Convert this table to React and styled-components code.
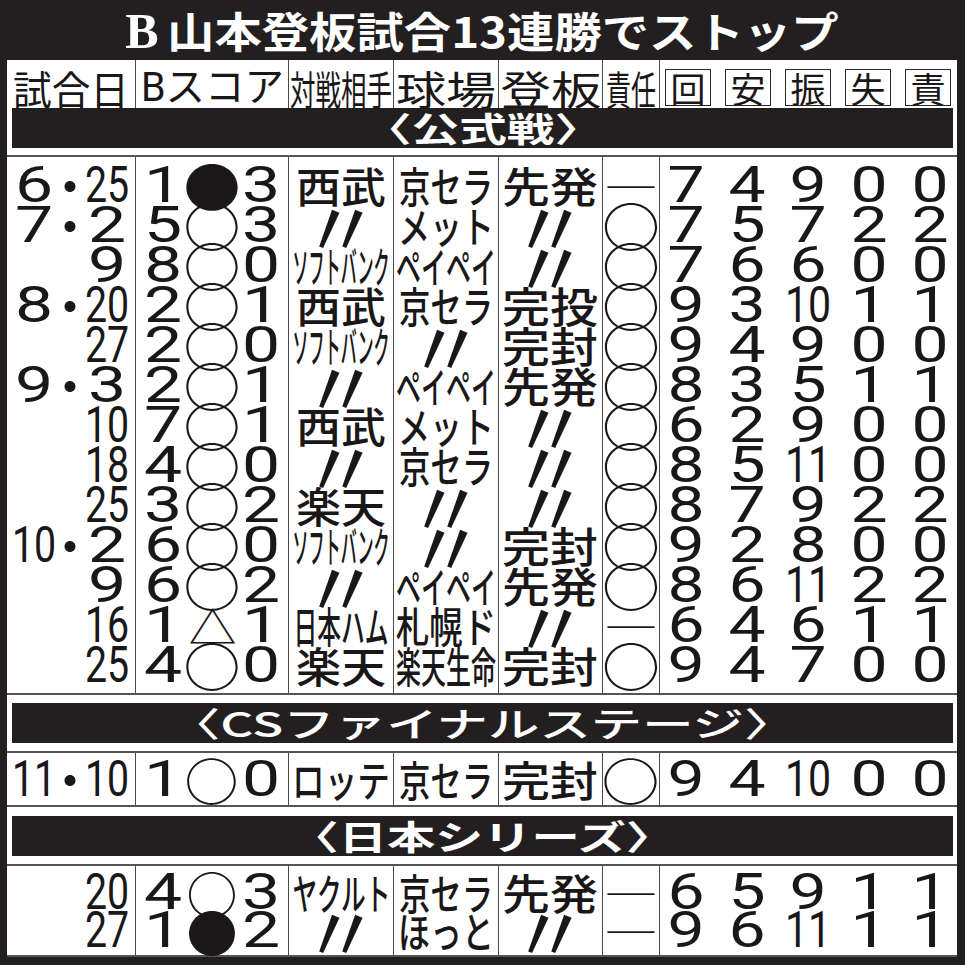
import React, { useLayoutEffect, useRef, useState } from 'react';
import styled, { createGlobalStyle } from 'styled-components';

const JP = '"Noto Sans CJK JP", "Noto Sans", sans-serif';
const NUM = 'Roboto, "Liberation Sans", "Noto Sans CJK JP", sans-serif';
const INK = '#1a1718';
const BLACK = '#231f20';
const LINE = '1.5px solid #4a4a4a';
const COLS = '129px 153px 105px 105px 104px 57px minmax(0, 1fr)';
const D = '〃';

const GlobalStyle = createGlobalStyle`
	html, body {
		margin: 0;
		padding: 0;
		background: ${BLACK};
	}
	body {
		font-family: ${JP};
		color: ${INK};
	}
`;

const FitBox = styled.span`
	display: inline-flex;
	justify-content: center;
	align-items: center;
	flex: none;
	width: ${(p) => p.$w}px;
`;

const Stretch = styled.span`
	display: inline-block;
	flex: none;
	white-space: nowrap;
	font-family: ${(p) => p.$font || JP};
	font-size: ${(p) => p.$size}px;
	font-weight: ${(p) => p.$weight || 400};
	line-height: 1;
	transform-origin: center;
`;

// squeezes / widens a text run to a given advance width (flattened newspaper type)
const Fit = ({ w, size, font, weight, children }) => {
	const ref = useRef(null);
	const [k, setK] = useState(1);

	useLayoutEffect(() => {
		const measure = () => {
			const n = ref.current && ref.current.offsetWidth;
			if (n) setK(w / n);
		};
		measure();
		if (document.fonts) document.fonts.ready.then(measure);
	}, [w, children]);

	return (
		<FitBox $w={w}>
			<Stretch ref={ref} $size={size} $font={font} $weight={weight} style={{ transform: `scaleX(${k})` }}>
				{children}
			</Stretch>
		</FitBox>
	);
};

const Page = styled.div`
	width: 965px;
	height: 965px;
	box-sizing: border-box;
	padding: 0 8px 0 7px;
	background: ${BLACK};
	display: flex;
	flex-direction: column;
	overflow: hidden;
`;

const Title = styled.h1`
	margin: 0;
	height: 60px;
	display: flex;
	align-items: center;
	justify-content: center;
	gap: 8px;
	color: #fff;
	font-weight: 700;
`;

const Logo = styled.span`
	font-family: 'Liberation Serif', serif;
	font-weight: 700;
	font-size: 50px;
	line-height: 1;
	margin-top: 2px;
`;

const Panel = styled.div`
	background: #fff;
	display: flex;
	flex-direction: column;
`;

const HeaderRow = styled.div`
	display: grid;
	grid-template-columns: ${COLS};
	height: 48px;
`;

const HeadCell = styled.div`
	display: flex;
	align-items: center;
	justify-content: ${(p) => (p.$start ? 'flex-start' : 'center')};
	padding-top: 7px;
	box-sizing: border-box;
	border-right: ${(p) => (p.$last ? 'none' : LINE)};
	overflow: visible;
`;

const StatHeads = styled.div`
	display: flex;
	gap: 14px;
	padding-left: 5px;
`;

const StatBox = styled.span`
	width: 46px;
	height: 37px;
	box-sizing: border-box;
	border: 1.5px solid #2a2a2a;
	display: flex;
	align-items: center;
	justify-content: center;
	font-size: 35px;
	line-height: 1;
`;

const Band = styled.div`
	height: 40px;
	margin: ${(p) => p.$mt || 0}px 4px ${(p) => p.$mb || 0}px 5px;
	background: ${BLACK};
	color: #fff;
	display: flex;
	align-items: center;
	justify-content: center;
`;

const Row = styled.div`
	display: grid;
	grid-template-columns: ${COLS};

	> * {
		height: ${(p) => p.$h}px;
	}
`;

const Cell = styled.div`
	display: flex;
	align-items: center;
	justify-content: ${(p) => p.$justify || 'center'};
	padding-right: ${(p) => p.$pr || 0}px;
	border-right: ${(p) => (p.$last ? 'none' : LINE)};
	overflow: visible;
`;

const Block = styled.div`
	border-top: 2px solid #555;
	border-bottom: 2px solid #555;

	> ${Row}:first-child > ${Cell} {
		padding-top: ${(p) => p.$pt}px;
	}
	> ${Row}:last-child > ${Cell} {
		padding-bottom: ${(p) => p.$pb}px;
	}
`;

const DateWrap = styled.div`
	display: grid;
	grid-template-columns: 42px 30px 44px;
	align-items: center;
`;

const Slot = styled.div`
	display: flex;
	align-items: center;
	justify-content: center;
	min-width: 0;
	height: 100%;
`;

const Dot = styled.span`
	font-family: ${JP};
	font-size: 52px;
	line-height: 1;
	margin-top: -2px;
`;

const ScoreWrap = styled.div`
	display: grid;
	grid-template-columns: 40px 50px 40px;
	column-gap: 4px;
	align-items: center;
	padding-left: 7px;
`;

const StatsWrap = styled.div`
	display: grid;
	grid-template-columns: repeat(5, 61px);
	align-items: center;
	margin-left: -4px;
`;

const Ditto = styled.span`
	display: inline-block;
	font-family: ${JP};
	font-size: 42px;
	line-height: 1;
	transform: scale(1.9, 1.85);
`;

const TEXT_W = {
	西武: 90,
	楽天: 90,
	ソフトバンク: 97,
	日本ハム: 95,
	ロッテ: 98,
	ヤクルト: 98,
	京セラ: 94,
	メット: 96,
	ペイペイ: 100,
	札幌ド: 100,
	楽天生命: 100,
	ほっと: 96,
	先発: 96,
	完投: 96,
	完封: 96,
};

const league = [
	{ m: '6', d: '25', s: ['1', '●', '3'], opp: '西武', park: '京セラ', role: '先発', res: '―', st: ['7', '4', '9', '0', '0'] },
	{ m: '7', d: '2', s: ['5', '○', '3'], opp: D, park: 'メット', role: D, res: '○', st: ['7', '5', '7', '2', '2'] },
	{ d: '9', s: ['8', '○', '0'], opp: 'ソフトバンク', park: 'ペイペイ', role: D, res: '○', st: ['7', '6', '6', '0', '0'] },
	{ m: '8', d: '20', s: ['2', '○', '1'], opp: '西武', park: '京セラ', role: '完投', res: '○', st: ['9', '3', '10', '1', '1'] },
	{ d: '27', s: ['2', '○', '0'], opp: 'ソフトバンク', park: D, role: '完封', res: '○', st: ['9', '4', '9', '0', '0'] },
	{ m: '9', d: '3', s: ['2', '○', '1'], opp: D, park: 'ペイペイ', role: '先発', res: '○', st: ['8', '3', '5', '1', '1'] },
	{ d: '10', s: ['7', '○', '1'], opp: '西武', park: 'メット', role: D, res: '○', st: ['6', '2', '9', '0', '0'] },
	{ d: '18', s: ['4', '○', '0'], opp: D, park: '京セラ', role: D, res: '○', st: ['8', '5', '11', '0', '0'] },
	{ d: '25', s: ['3', '○', '2'], opp: '楽天', park: D, role: D, res: '○', st: ['8', '7', '9', '2', '2'] },
	{ m: '10', d: '2', s: ['6', '○', '0'], opp: 'ソフトバンク', park: D, role: '完封', res: '○', st: ['9', '2', '8', '0', '0'] },
	{ d: '9', s: ['6', '○', '2'], opp: D, park: 'ペイペイ', role: '先発', res: '○', st: ['8', '6', '11', '2', '2'] },
	{ d: '16', s: ['1', '△', '1'], opp: '日本ハム', park: '札幌ド', role: D, res: '―', st: ['6', '4', '6', '1', '1'] },
	{ d: '25', s: ['4', '○', '0'], opp: '楽天', park: '楽天生命', role: '完封', res: '○', st: ['9', '4', '7', '0', '0'] },
];

const climax = [
	{ m: '11', d: '10', s: ['1', '○', '0'], opp: 'ロッテ', park: '京セラ', role: '完封', res: '○', st: ['9', '4', '10', '0', '0'] },
];

const series = [
	{ d: '20', s: ['4', '○', '3'], opp: 'ヤクルト', park: '京セラ', role: '先発', res: '―', st: ['6', '5', '9', '1', '1'] },
	{ d: '27', s: ['1', '●', '2'], opp: D, park: 'ほっと', role: D, res: '―', st: ['9', '6', '11', '1', '1'] },
];

const Num = ({ v, one = 38, two = 44 }) => (
	<Fit w={v.length > 1 ? two : one} size={50} font={NUM} weight={400}>
		{v}
	</Fit>
);

const Word = ({ v }) =>
	v === D ? (
		<Ditto>{D}</Ditto>
	) : (
		<Fit w={TEXT_W[v] || 96} size={42} weight={500}>
			{v}
		</Fit>
	);

const Mark = ({ v, w = 58, size = 52 }) => {
	if (v === '―') return <Fit w={55} size={44}>{v}</Fit>;
	if (v === '△') return <Fit w={48} size={43}>{v}</Fit>;
	return (
		<Fit w={w} size={size}>
			{v}
		</Fit>
	);
};

const GameRow = ({ g, h, markW, markSize }) => (
	<Row $h={h}>
		<Cell $justify="flex-end" $pr={6}>
			<DateWrap>
				<Slot>{g.m && <Num v={g.m} />}</Slot>
				<Slot>{g.m && <Dot>・</Dot>}</Slot>
				<Slot>
					<Num v={g.d} />
				</Slot>
			</DateWrap>
		</Cell>
		<Cell $justify="flex-start">
			<ScoreWrap>
				<Slot>
					<Num v={g.s[0]} />
				</Slot>
				<Slot>
					<Mark v={g.s[1]} w={markW} size={markSize} />
				</Slot>
				<Slot>
					<Num v={g.s[2]} />
				</Slot>
			</ScoreWrap>
		</Cell>
		<Cell>
			<Word v={g.opp} />
		</Cell>
		<Cell>
			<Word v={g.park} />
		</Cell>
		<Cell>
			<Word v={g.role} />
		</Cell>
		<Cell>
			<Mark v={g.res} size={markSize} />
		</Cell>
		<Cell $justify="flex-start" $last>
			<StatsWrap>
				{g.st.map((v, i) => (
					<Slot key={i}>
						<Num v={v} one={37} two={46} />
					</Slot>
				))}
			</StatsWrap>
		</Cell>
	</Row>
);

const Games = ({ rows, h, pt, pb, markW, markSize }) => (
	<Block $pt={pt} $pb={pb}>
		{rows.map((g, i) => (
			<GameRow key={i} g={g} h={h} markW={markW} markSize={markSize} />
		))}
	</Block>
);

const App = () => (
	<>
		<GlobalStyle />
		<Page>
			<Title>
				<Logo>B</Logo>
				<Fit w={672} size={42} weight={700}>
					山本登板試合13連勝でストップ
				</Fit>
			</Title>
			<Panel>
				<HeaderRow>
					<HeadCell>
						<Fit w={116} size={40}>
							試合日
						</Fit>
					</HeadCell>
					<HeadCell>
						<Fit w={143} size={40} font={NUM}>
							Bスコア
						</Fit>
					</HeadCell>
					<HeadCell>
						<Fit w={102} size={40}>
							対戦相手
						</Fit>
					</HeadCell>
					<HeadCell>
						<Fit w={100} size={40}>
							球場
						</Fit>
					</HeadCell>
					<HeadCell>
						<Fit w={101} size={40}>
							登板
						</Fit>
					</HeadCell>
					<HeadCell>
						<Fit w={50} size={40}>
							責任
						</Fit>
					</HeadCell>
					<HeadCell $start $last>
						<StatHeads>
							{['回', '安', '振', '失', '責'].map((c) => (
								<StatBox key={c}>{c}</StatBox>
							))}
						</StatHeads>
					</HeadCell>
				</HeaderRow>

				<Band $mb={7}>
					<Fit w={238} size={34} weight={700}>
						〈公式戦〉
					</Fit>
				</Band>
				<Games rows={league} h={40} pt={8} pb={8} markW={57} markSize={52} />

				<Band $mt={8} $mb={8}>
					<Fit w={626} size={34} weight={500}>
						〈CSファイナルステージ〉
					</Fit>
				</Band>
				<Games rows={climax} h={52} pt={0} pb={0} markW={54} markSize={51} />

				<Band $mt={9} $mb={8}>
					<Fit w={383} size={34} weight={700}>
						〈日本シリーズ〉
					</Fit>
				</Band>
				<Games rows={series} h={38} pt={7} pb={6} markW={51} markSize={50} />
			</Panel>
		</Page>
	</>
);

export default App;
